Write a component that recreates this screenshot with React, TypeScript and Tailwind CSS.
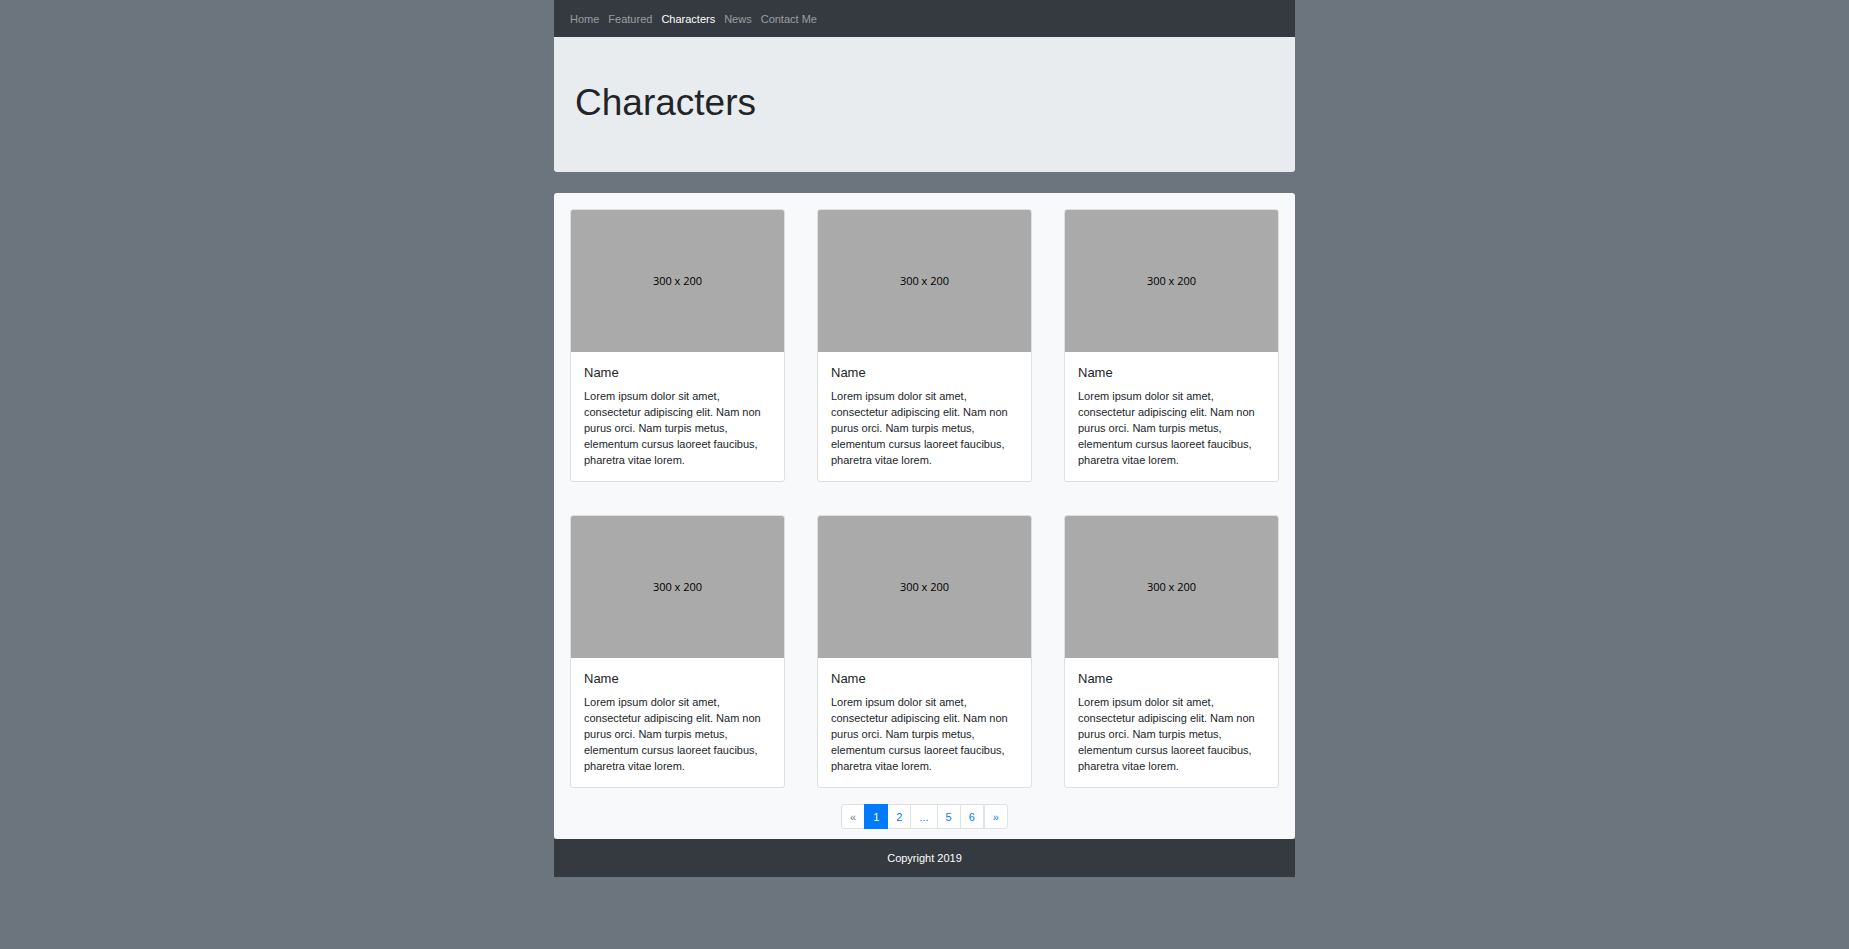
const navLinks = ['Home', 'Featured', 'Characters', 'News', 'Contact Me'];

const blurb =
  'Lorem ipsum dolor sit amet, consectetur adipiscing elit. Nam non purus orci. Nam turpis metus, elementum cursus laoreet faucibus, pharetra vitae lorem.';

const characters = Array.from({ length: 6 }, (_, id) => ({ id, name: 'Name', blurb }));

const pages = ['1', '2', '...', '5', '6'];

function NavBar() {
  return (
    <nav className="flex h-[37px] items-center gap-[9px] bg-[#343a40] px-4">
      {navLinks.map((label) => (
        <a
          key={label}
          href="#"
          aria-current={label === 'Characters' ? 'page' : undefined}
          className={label === 'Characters' ? 'text-white' : 'text-white/50 hover:text-white/75'}
        >
          {label}
        </a>
      ))}
    </nav>
  );
}

function Placeholder() {
  return (
    <div className="flex aspect-[3/2] items-center justify-center rounded-t-[2px] bg-[#aaaaaa] font-['Open_Sans',sans-serif] text-[11px] text-black">
      300 x 200
    </div>
  );
}

function CharacterCard({ name, text }: { name: string; text: string }) {
  return (
    <article className="rounded-[3px] border border-[#dfdfdf] bg-white">
      <Placeholder />
      <div className="p-[13px]">
        <h2 className="mb-[7px] text-[13px] leading-4">{name}</h2>
        <p>{text}</p>
      </div>
    </article>
  );
}

function Pagination() {
  const item = 'flex h-[25px] items-center border border-[#dee2e6] px-2';
  return (
    <nav aria-label="Pages" className="mt-4 flex justify-center">
      <ul className="flex">
        <li>
          <button type="button" disabled aria-label="Previous" className={`${item} rounded-l-[3px] bg-white text-[#6c757d]`}>
            «
          </button>
        </li>
        {pages.map((page) => (
          <li key={page} className="-ml-px">
            <a
              href="#"
              aria-current={page === '1' ? 'page' : undefined}
              className={
                page === '1'
                  ? 'relative flex h-[25px] items-center border border-[#007bff] bg-[#007bff] px-2 text-white'
                  : `${item} bg-white text-[#007bff]`
              }
            >
              {page}
            </a>
          </li>
        ))}
        <li>
          <a href="#" aria-label="Next" className={`${item} rounded-r-[3px] bg-white text-[#007bff]`}>
            »
          </a>
        </li>
      </ul>
    </nav>
  );
}

export default function App() {
  return (
    <div className="min-h-screen bg-[#6c757d] font-['Liberation_Sans',Arial,sans-serif] text-[11px] leading-4 text-[#212529]">
      <div className="mx-auto max-w-[741px]">
        <NavBar />
        <header className="mb-[21px] rounded-b-[3px] bg-[#e9ecef] px-[21px] pt-11 pb-[47px]">
          <h1 className="text-[37px] leading-[44px]">Characters</h1>
        </header>
        <main className="rounded-[3px] bg-[#f8f9fa] px-4 pt-4 pb-[10px]">
          <div className="grid grid-cols-3 gap-x-8 gap-y-[33px]">
            {characters.map((character) => (
              <CharacterCard key={character.id} name={character.name} text={character.blurb} />
            ))}
          </div>
          <Pagination />
        </main>
        <footer className="bg-[#343a40] py-[11px] text-center text-white">Copyright 2019</footer>
      </div>
    </div>
  );
}
